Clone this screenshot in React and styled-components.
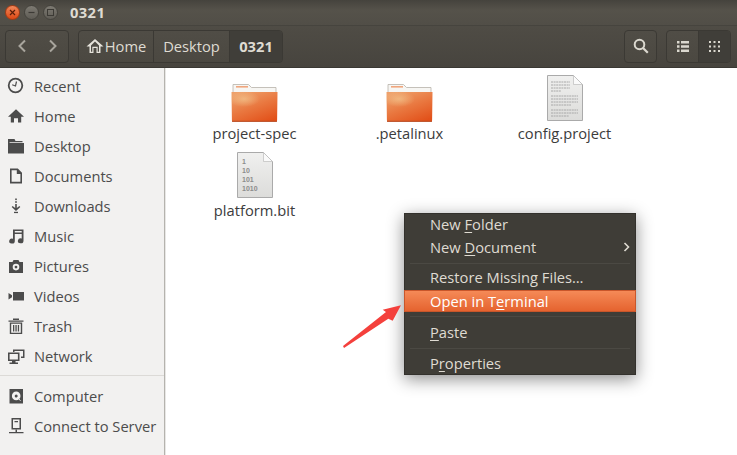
import React from "react";
import styled, { createGlobalStyle } from "styled-components";

const Global = createGlobalStyle`
  html, body { margin: 0; padding: 0; background: #fff; }
  body { font-family: "Open Sans", "Noto Sans", "Liberation Sans", sans-serif; }
`;

const Window = styled.div`
  position: relative;
  width: 737px;
  height: 455px;
  overflow: hidden;
  display: flex;
  flex-direction: column;
`;

//=========================== Title bar ====================================
const TitleBar = styled.div`
  height: 25px;
  display: flex;
  align-items: center;
  padding-left: 5px;
  background: linear-gradient(#45433d, #55524a 40%, #514e47);
`;

const WinButton = styled.div`
  width: 15px;
  height: 15px;
  border-radius: 50%;
  margin-right: 4px;
  box-sizing: border-box;
  display: flex;
  align-items: center;
  justify-content: center;
  background: ${(props) =>
    props.close ? "linear-gradient(#f0875a, #dd4814)" : "linear-gradient(#7d7a72, #5f5c55)"};
  border: 1px solid ${(props) => (props.close ? "#a53a12" : "#44423c")};
`;

const Title = styled.div`
  margin-left: 8px;
  padding-bottom: 2px;
  font-size: 14.7px;
  font-weight: 700;
  color: #dfdbd2;
  letter-spacing: 0.4px;
`;

//=========================== Tool bar ====================================
const ToolBar = styled.div`
  height: 43px;
  box-sizing: border-box;
  display: flex;
  align-items: center;
  padding: 0 6px 1px 5px;
  background: linear-gradient(#4f4c45, #47443e);
  border-top: 1px solid #46443e;
  border-bottom: 1px solid #3a3833;
`;

const Group = styled.div`
  display: flex;
  height: 33px;
  box-sizing: border-box;
  border: 1px solid #3b3934;
  border-radius: 4px;
  margin-right: ${(props) => props.gap || 0}px;
  overflow: hidden;
  background: linear-gradient(#504d46, #4b4841);
`;

const ToolCell = styled.div`
  width: ${(props) => props.width}px;
  display: flex;
  align-items: center;
  justify-content: center;
  gap: 1px;
  font-size: 14.7px;
  font-weight: ${(props) => (props.bold ? 700 : 400)};
  color: #dfdbd2;
  background: ${(props) => (props.active ? "#403e39" : "transparent")};
  border-left: ${(props) => (props.divider ? "1px solid #3b3934" : "none")};
  svg { display: block; }
`;

const Spacer = styled.div`
  flex: 1;
`;

//=========================== Body ====================================
const Body = styled.div`
  flex: 1;
  display: flex;
  min-height: 0;
`;

const Sidebar = styled.div`
  width: 165px;
  box-sizing: border-box;
  background: #f2f1f0;
  border-right: 1px solid #b5b3ae;
  padding-top: 3px;
  margin-right: 1px;
  box-shadow: 1px 0 0 #e8e7e5;
`;

const Place = styled.div`
  height: 30px;
  display: flex;
  align-items: center;
  color: #4c4c4c;
  font-size: 14.7px;
  svg { width: 18px; height: 18px; margin-left: 7px; margin-right: 9px; flex: none; }
`;

const SideRule = styled.div`
  height: 1px;
  margin: 4px 0 5px;
  background: #dcdad7;
`;

const Files = styled.div`
  flex: 1;
  display: grid;
  grid-template-columns: repeat(3, 155px);
  grid-auto-rows: 77px;
  padding: 5px 0 0 11px;
  background: #fff;
`;

const FileItem = styled.div`
  display: flex;
  flex-direction: column;
  align-items: center;
  color: #3c3c3c;
  font-size: 14.7px;
  line-height: 18px;
  white-space: nowrap;
  svg { display: block; height: 50px; margin-bottom: 1px; }
`;

//=========================== Context menu ====================================
const Menu = styled.div`
  position: absolute;
  left: 404px;
  top: 213px;
  width: 232px;
  height: 162px;
  box-sizing: border-box;
  background: #3f3d37;
  border: 1px solid #33312c;
  color: #dfdbd2;
  font-size: 14.7px;
  box-shadow: 0 4px 16px rgba(0, 0, 0, 0.45);
`;

const MenuItem = styled.div`
  height: ${(props) => (props.active ? 22 : 23)}px;
  display: flex;
  align-items: center;
  justify-content: space-between;
  box-sizing: border-box;
  padding: 0 5px ${(props) => (props.active ? 0 : 3)}px 25px;
  white-space: nowrap;
  u { text-underline-offset: 2px; }
  ${(props) =>
    props.active &&
    `
    color: #fff;
    margin: 0 -1px;
    background: linear-gradient(#f58a57, #e5632f);
    border: 1px solid #c9562a;
  `}
`;

const MenuRule = styled.div`
  height: 1px;
  margin: ${(props) => props.m || "4px 5px"};
  background: #4b4943;
`;

const Arrow = styled.svg`
  position: absolute;
  left: 342px;
  top: 303px;
`;

const FolderIcon = () => (
  <svg viewBox="0 0 48 50" width="48" height="50">
    <defs>
      <linearGradient id="folderBody" x1="0.2" y1="0" x2="0.8" y2="1">
        <stop offset="0" stopColor="#eea06a" />
        <stop offset="0.5" stopColor="#e9773f" />
        <stop offset="1" stopColor="#e2511a" />
      </linearGradient>
      <radialGradient id="folderGlow" cx="0.5" cy="0.5" r="0.5">
        <stop offset="0" stopColor="#f3c68e" stopOpacity="0.7" />
        <stop offset="1" stopColor="#f3c68e" stopOpacity="0" />
      </radialGradient>
    </defs>
    <path d="M2 11.500h15.500l3 3H45V20H2z" fill="#f7f6f3" stroke="#b8b3aa" strokeWidth="0.8" />
    <rect x="5" y="13" width="12" height="1.600" fill="#f0a67e" />
    <path d="M0.500 19h46l-0.400 28.300a1.200 1.200 0 0 1-1.200 1.200H2.100a1.200 1.200 0 0 1-1.200-1.200z" fill="url(#folderBody)" />
    <ellipse cx="13" cy="26" rx="16" ry="8" fill="url(#folderGlow)" />
    <rect x="1" y="47.800" width="45" height="1" fill="#b5451c" />
  </svg>
);

const TextFileIcon = () => (
  <svg viewBox="0 0 38 50" width="38" height="50">
    <defs>
      <linearGradient id="page" x1="0" y1="0" x2="0" y2="1">
        <stop offset="0" stopColor="#f0f0ef" />
        <stop offset="1" stopColor="#dcdcda" />
      </linearGradient>
    </defs>
    <path d="M1.500 2.500h26l9 9v36h-35z" fill="url(#page)" stroke="#aaa" />
    <path d="M27.500 2.500v9h9z" fill="#fafafa" stroke="#bbb" strokeWidth="0.700" />
    <g stroke="#a8a8a8" strokeWidth="1" strokeDasharray="2 0.600">
      <path d="M5 9h19M5 12h19M5 15h19M5 18h10M5 23h27M5 26h27M5 29h27M5 32h20M5 37h27M5 40h27M5 43h18" />
    </g>
  </svg>
);

const BitFileIcon = () => (
  <svg viewBox="0 0 38 50" width="38" height="50" fontFamily="Liberation Sans, sans-serif">
    <path d="M1.500 2.500h26l9 9v36h-35z" fill="url(#page)" stroke="#aaa" />
    <path d="M27.500 2.500v9h9z" fill="#fafafa" stroke="#bbb" strokeWidth="0.700" />
    <g fontSize="7" fontWeight="700" fill="#8c8c8c">
      <text x="6" y="14">1</text>
      <text x="6" y="23">10</text>
      <text x="6" y="32">101</text>
      <text x="6" y="41">1010</text>
    </g>
  </svg>
);

// sidebar glyphs
const icons = {
  recent: (
    <g fill="none" stroke="#4c4c4c">
      <circle cx="8.500" cy="8.500" r="6.800" strokeWidth="1.800" />
      <path d="M9.500 4.500L8.500 9L5.200 7.800" strokeWidth="1.200" />
    </g>
  ),
  home: <path d="M9 2.200L1 9.800H3.800v5.700h3.200v-4.200h4v4.200h3.200V9.800H17z" fill="#4c4c4c" />,
  desktop: (
    <g fill="#4c4c4c">
      <path d="M1 2h6.500l1 2H1z" />
      <path d="M3.500 6H17v10.500H1V6z" />
      <path d="M1 4h14.500v1.300H2.600v2H1z" />
    </g>
  ),
  documents: <path d="M3 1.500h7.800L15 5.800v10.700H3zM4.600 3.200v11.600h8.800V7h-3.600V3.200z" fill="#4c4c4c" fillRule="evenodd" />,
  downloads: (
    <g fill="#4c4c4c">
      <rect x="8.200" y="1.500" width="1.600" height="1.600" />
      <rect x="8.200" y="4.200" width="1.600" height="1.600" />
      <path d="M8.200 7h1.600v4l2.600-2 .9 1L9 14 4.700 10l.9-1 2.600 2z" />
      <rect x="7" y="14.800" width="4" height="1.300" />
    </g>
  ),
  music: <path d="M6 2.500h10.500v11.200a2.800 2.500 0 1 1-1.800-2.300V7H7.800v7a2.800 2.500 0 1 1-1.800-2.300zM7.800 4v1.500h6.900V4z" fill="#4c4c4c" fillRule="evenodd" />,
  pictures: (
    <g fillRule="evenodd">
      <path d="M2 5h3.500l1-2h5l1 2H16v11H2zM9 6.800a3.300 3.300 0 1 0 0 6.600a3.300 3.300 0 0 0 0-6.600z" fill="#4c4c4c" />
      <circle cx="9" cy="10.100" r="1.400" fill="#4c4c4c" />
    </g>
  ),
  videos: <path d="M6 5h11v8.500H6zM1.500 6l3.500 2.300v2L1.500 12.500z" fill="#4c4c4c" />,
  trash: (
    <g fill="#4c4c4c">
      <path d="M1.500 3.500h15v1.300h-15zM6 1.500h6V3H6z" />
      <path d="M2.800 5.500h12.400V17H2.800zM4.200 6.700v9h9.600v-9z" fillRule="evenodd" />
      <path d="M6 8h1.300v6.500H6zM8.400 8h1.300v6.500H8.400zM10.800 8h1.300v6.500h-1.300z" />
    </g>
  ),
  network: (
    <g fill="#4c4c4c">
      <path d="M1 5.500h11.500V14H1zM2.600 7v5.500h8.300V7z" fillRule="evenodd" />
      <path d="M5 14h3.500v1.500h2.500V17H2.500v-1.500H5z" />
      <path d="M6 2.500h11.500V11H14V9.500h2V4H7.500v1H6z" />
    </g>
  ),
  computer: (
    <g fillRule="evenodd">
      <path d="M2.500 2h13.500v14.500H2.500zM9.200 4.600a4.300 4.300 0 1 0 0 8.600a4.300 4.300 0 0 0 0-8.600z" fill="#4c4c4c" />
      <circle cx="9.200" cy="8.900" r="1.500" fill="#4c4c4c" />
      <path d="M10.200 10l3.300 3.800" stroke="#f2f1f0" strokeWidth="1" />
    </g>
  ),
  server: (
    <g fill="#4c4c4c">
      <path d="M4.500 1h9.500v11.500H4.500zM6 2.600v8.400h6.500V2.600z" fillRule="evenodd" />
      <path d="M7.500 4h3.500v1.200H7.500zM8.500 12.500h1.500v2.500H8.500zM2 15h14.500v1.300H2z" />
    </g>
  ),
};

const places = [
  ["recent", "Recent"],
  ["home", "Home"],
  ["desktop", "Desktop"],
  ["documents", "Documents"],
  ["downloads", "Downloads"],
  ["music", "Music"],
  ["pictures", "Pictures"],
  ["videos", "Videos"],
  ["trash", "Trash"],
  ["network", "Network"],
];

const SidebarRow = ({ icon, label }) => (
  <Place>
    <svg viewBox="0 0 18 18">{icons[icon]}</svg>
    {label}
  </Place>
);

export default function App() {
  return (
    <Window>
      <Global />
      <TitleBar>
        <WinButton close>
          <svg width="7" height="7" viewBox="0 0 7 7">
            <path d="M1 1l5 5M6 1L1 6" stroke="#5a1d08" strokeWidth="1.200" />
          </svg>
        </WinButton>
        <WinButton>
          <svg width="7" height="7" viewBox="0 0 7 7">
            <path d="M0.500 3.500h6" stroke="#3c3a35" strokeWidth="1.200" />
          </svg>
        </WinButton>
        <WinButton>
          <svg width="7" height="7" viewBox="0 0 7 7">
            <rect x="0.500" y="0.500" width="6" height="6" fill="none" stroke="#3c3a35" />
          </svg>
        </WinButton>
        <Title>0321</Title>
      </TitleBar>
      <ToolBar>
        <Group gap={9}>
          <ToolCell width={31}>
            <svg width="10" height="14" viewBox="0 0 10 14">
              <path d="M8 1.500L2.500 7L8 12.500" fill="none" stroke="#a8a59d" strokeWidth="2" />
            </svg>
          </ToolCell>
          <ToolCell width={31}>
            <svg width="10" height="14" viewBox="0 0 10 14">
              <path d="M2 1.500L7.500 7L2 12.500" fill="none" stroke="#a8a59d" strokeWidth="2" />
            </svg>
          </ToolCell>
        </Group>
        <Group>
          <ToolCell width={74}>
            <svg width="18" height="16" viewBox="0 0 18 16">
              <path d="M9 1L0.500 8.500H3.500V15H7.500V10H10.500V15H14.500V8.500H17.500zM5 13.700V7.500L9 3.500l4 4v6.200h-1.300V8.700H6.300v5z" fill="#e6e3db" fillRule="evenodd" />
            </svg>
            Home
          </ToolCell>
          <ToolCell width={75} divider>Desktop</ToolCell>
          <ToolCell width={52} divider active bold>0321</ToolCell>
        </Group>
        <Spacer />
        <Group gap={9}>
          <ToolCell width={31}>
            <svg width="16" height="16" viewBox="0 0 16 16">
              <circle cx="6.500" cy="6.500" r="4.800" fill="none" stroke="#dbd8cf" strokeWidth="2" />
              <path d="M10 10l4.800 4.800" stroke="#dbd8cf" strokeWidth="2.200" />
            </svg>
          </ToolCell>
        </Group>
        <Group>
          <ToolCell width={31}>
            <svg width="12" height="11" viewBox="0 0 12 11">
              <path d="M0 0h2.500v2.500H0zM4 0h8v2.500H4zM0 4.200h2.500v2.500H0zM4 4.200h8v2.500H4zM0 8.500h2.500V11H0zM4 8.500h8V11H4z" fill="#dbd8cf" />
            </svg>
          </ToolCell>
          <ToolCell width={31} divider active>
            <svg width="11" height="11" viewBox="0 0 11 11">
              <path d="M0 0h2v2H0zM4.500 0h2v2h-2zM9 0h2v2H9zM0 4.500h2v2H0zM4.500 4.500h2v2h-2zM9 4.500h2v2H9zM0 9h2v2H0zM4.500 9h2v2h-2zM9 9h2v2H9z" fill="#dbd8cf" />
            </svg>
          </ToolCell>
        </Group>
      </ToolBar>
      <Body>
        <Sidebar>
          {places.map(([icon, label]) => (
            <SidebarRow key={icon} icon={icon} label={label} />
          ))}
          <SideRule />
          <SidebarRow icon="computer" label="Computer" />
          <SidebarRow icon="server" label="Connect to Server" />
        </Sidebar>
        <Files>
          <FileItem><FolderIcon />project-spec</FileItem>
          <FileItem><FolderIcon />.petalinux</FileItem>
          <FileItem><TextFileIcon />config.project</FileItem>
          <FileItem><BitFileIcon />platform.bit</FileItem>
        </Files>
      </Body>
      <Menu>
        <MenuItem>
          <span>New <u>F</u>older</span>
        </MenuItem>
        <MenuItem>
          <span>New <u>D</u>ocument</span>
          <svg width="7" height="10" viewBox="0 0 7 10">
            <path d="M1.500 1L5.500 5L1.500 9" fill="none" stroke="#dfdbd2" strokeWidth="1.600" />
          </svg>
        </MenuItem>
        <MenuRule m="3px 5px 3px" />
        <MenuItem>Restore Missing Files…</MenuItem>
        <MenuItem active>
          <span>Open in T<u>e</u>rminal</span>
        </MenuItem>
        <MenuRule m="4px 5px 5px" />
        <MenuItem>
          <span><u>P</u>aste</span>
        </MenuItem>
        <MenuRule m="3px 5px 4px" />
        <MenuItem>
          <span>P<u>r</u>operties</span>
        </MenuItem>
      </Menu>
      <Arrow width="62" height="46" viewBox="0 0 62 46">
        <path d="M59 2.300L40.700 6.700L44 9L1 43L2 45L46.300 15.700L50.700 17.700Z" fill="#f4403c" />
      </Arrow>
    </Window>
  );
}
